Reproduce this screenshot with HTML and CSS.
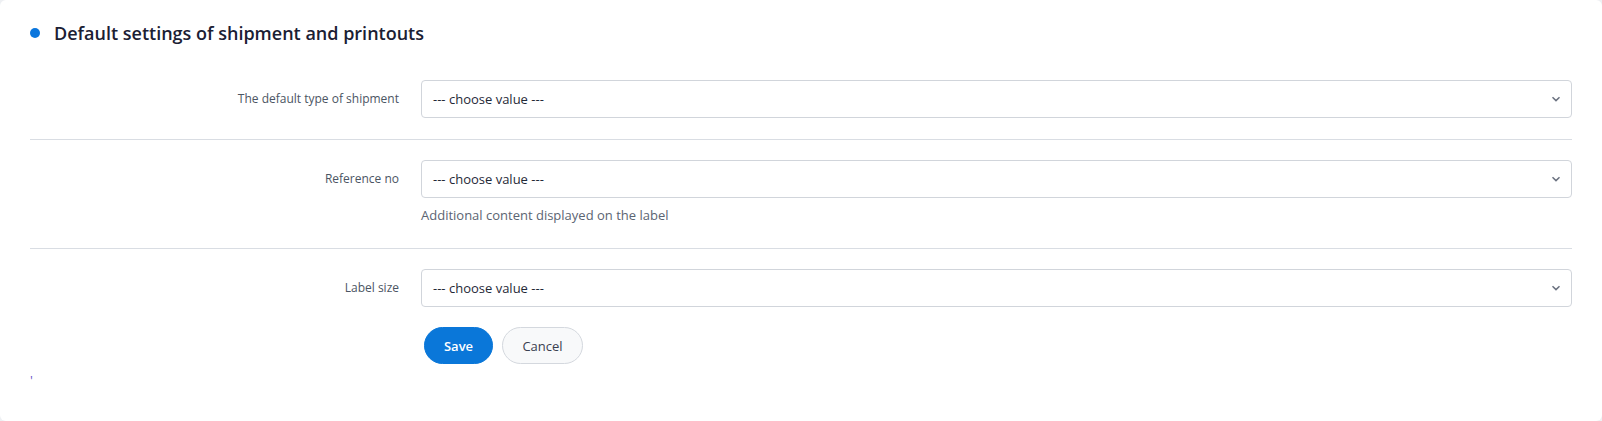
FILE: index.html
```html
<!DOCTYPE html>
<html lang="en">
<head>
<meta charset="utf-8">
<title>Default settings of shipment and printouts</title>
<link rel="stylesheet" href="styles.css">
</head>
<body>
<div class="card">
  <h2 class="title"><span class="dot"></span>Default settings of shipment and printouts</h2>
  <form class="form">
    <div class="row">
      <label class="label">The default type of shipment</label>
      <div class="field">
        <div class="select"><span>--- choose value ---</span><svg class="chev" width="10" height="6" viewBox="0 0 10 6"><path d="M1.5 1.2 5 4.6 8.5 1.2" fill="none" stroke="#6b7280" stroke-width="1.5"/></svg></div>
      </div>
    </div>
    <div class="row">
      <label class="label">Reference no</label>
      <div class="field">
        <div class="select"><span>--- choose value ---</span><svg class="chev" width="10" height="6" viewBox="0 0 10 6"><path d="M1.5 1.2 5 4.6 8.5 1.2" fill="none" stroke="#6b7280" stroke-width="1.5"/></svg></div>
        <div class="help">Additional content displayed on the label</div>
      </div>
    </div>
    <div class="row last">
      <label class="label">Label size</label>
      <div class="field">
        <div class="select"><span>--- choose value ---</span><svg class="chev" width="10" height="6" viewBox="0 0 10 6"><path d="M1.5 1.2 5 4.6 8.5 1.2" fill="none" stroke="#6b7280" stroke-width="1.5"/></svg></div>
        <div class="actions">
          <button type="button" class="btn btn-primary">Save</button>
          <button type="button" class="btn btn-secondary">Cancel</button>
        </div>
      </div>
    </div>
  </form>
  <div class="tick">'</div>
</div>
</body>
</html>
```

FILE: styles.css
```css
* { box-sizing: border-box; }
html, body { margin: 0; padding: 0; }
body {
  background: #eef0f3;
  font-family: "Open Sans", "Noto Sans", sans-serif;
  width: 1602px;
  height: 421px;
  overflow: hidden;
}
.card {
  background: #ffffff;
  border-radius: 6px;
  height: 421px;
  padding: 20px 30px 0 30px;
}
.title {
  margin: 0;
  display: flex;
  align-items: center;
  gap: 14px;
  font-size: 18px;
  font-weight: 600;
  color: #1b2033;
  line-height: 26px;
  height: 26px;
}
.dot {
  width: 10px;
  height: 10px;
  border-radius: 50%;
  background: #0a76dd;
  flex: none;
}
.form {
  margin-top: 34px;
}
.row {
  display: flex;
  align-items: flex-start;
  border-bottom: 1px solid #d9dde3;
  padding-bottom: 21px;
  margin-bottom: 20px;
}
.row.last {
  border-bottom: none;
  padding-bottom: 0;
  margin-bottom: 0;
}
.label {
  width: 379px;
  flex: none;
  text-align: right;
  padding-right: 10px;
  font-size: 12px;
  color: #4b5563;
  line-height: 38px;
}
.field {
  margin-left: 12px;
  flex: 1;
}
.select {
  height: 38px;
  border: 1px solid #d1d5db;
  border-radius: 4px;
  display: flex;
  align-items: center;
  justify-content: space-between;
  padding: 0 10px 0 11px;
  font-size: 13px;
  color: #1f2937;
}
.chev { display: block; }
.help {
  margin-top: 8px;
  margin-bottom: 3px;
  font-size: 13px;
  color: #5b6472;
  line-height: 18px;
}
.actions {
  margin-top: 20px;
  margin-left: 3px;
  display: flex;
  gap: 9px;
}
.btn {
  height: 37px;
  border-radius: 19px;
  font-family: "Open Sans", "Noto Sans", sans-serif;
  font-size: 13px;
  cursor: pointer;
}
.btn-primary {
  width: 69px;
  background: #0a77d9;
  border: 1px solid #0a77d9;
  color: #ffffff;
  font-weight: 600;
}
.btn-secondary {
  width: 81px;
  background: #f8f9fa;
  border: 1px solid #d4d8de;
  color: #3a4050;
}
.tick {
  margin-top: 8px;
  font-size: 13px;
  line-height: 16px;
  color: #6b55c8;
}
```
